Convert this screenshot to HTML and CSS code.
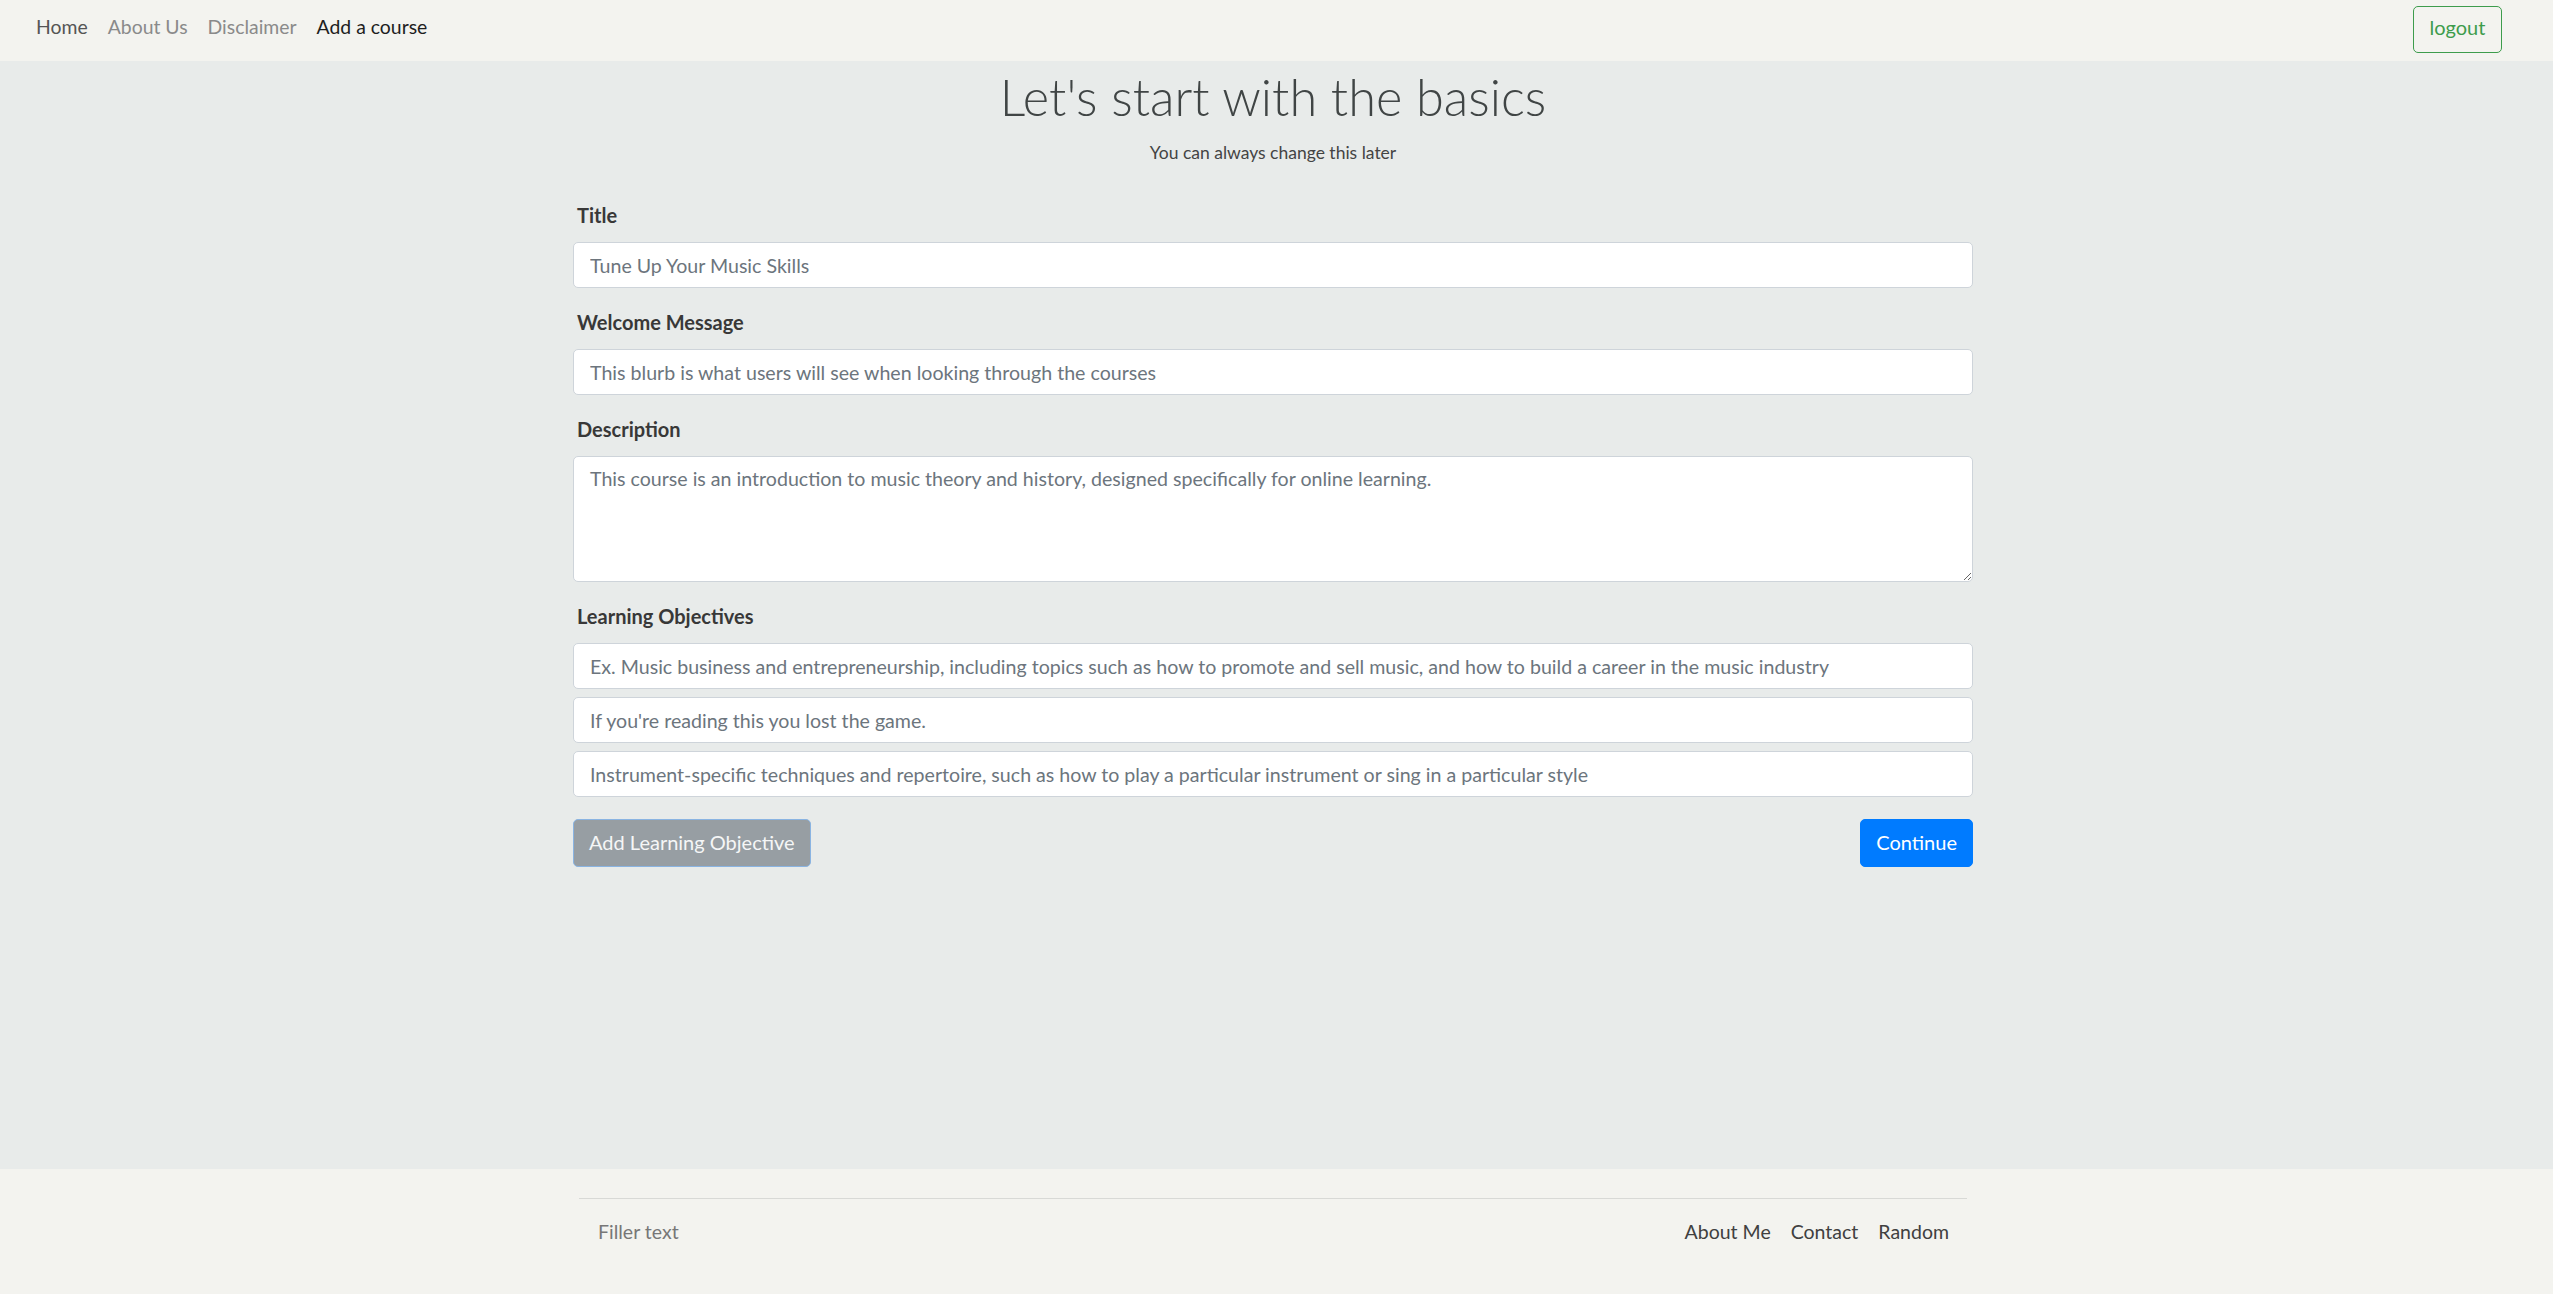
FILE: index.html
```html
<!DOCTYPE html>
<html lang="en">
<head>
<meta charset="utf-8">
<title>Add a course</title>
<link rel="stylesheet" href="styles.css">
</head>
<body>
<header class="navbar">
  <nav class="nav-left">
    <a class="nav-link nav-home" href="#">Home</a>
    <a class="nav-link nav-muted" href="#">About Us</a>
    <a class="nav-link nav-muted" href="#">Disclaimer</a>
    <a class="nav-link nav-active" href="#">Add a course</a>
  </nav>
  <button class="btn-logout" type="button">logout</button>
</header>

<main class="main">
  <div class="container">
    <h1 class="page-title">Let's start with the basics</h1>
    <p class="subtitle">You can always change this later</p>

    <form class="course-form">
      <div class="form-group">
        <label class="form-label" for="title">Title</label>
        <input class="form-control" id="title" type="text" value="Tune Up Your Music Skills">
      </div>
      <div class="form-group">
        <label class="form-label" for="welcome">Welcome Message</label>
        <input class="form-control" id="welcome" type="text" value="This blurb is what users will see when looking through the courses">
      </div>
      <div class="form-group">
        <label class="form-label" for="desc">Description</label>
        <textarea class="form-control form-textarea" id="desc">This course is an introduction to music theory and history, designed specifically for online learning.</textarea>
      </div>
      <div class="form-group group-objectives">
        <label class="form-label" for="obj1">Learning Objectives</label>
        <div class="objectives">
          <input class="form-control" id="obj1" type="text" value="Ex. Music business and entrepreneurship, including topics such as how to promote and sell music, and how to build a career in the music industry">
          <input class="form-control" type="text" value="If you're reading this you lost the game.">
          <input class="form-control" type="text" value="Instrument-specific techniques and repertoire, such as how to play a particular instrument or sing in a particular style">
        </div>
      </div>
      <div class="actions">
        <button class="btn btn-disabled" type="button">Add Learning Objective</button>
        <button class="btn btn-primary" type="button">Continue</button>
      </div>
    </form>
  </div>
</main>

<footer class="footer">
  <div class="footer-inner">
    <hr class="footer-rule">
    <div class="footer-row">
      <span class="filler">Filler text</span>
      <nav class="footer-links">
        <a class="footer-link" href="#">About Me</a>
        <a class="footer-link" href="#">Contact</a>
        <a class="footer-link" href="#">Random</a>
      </nav>
    </div>
  </div>
</footer>
</body>
</html>
```

FILE: styles.css
```css
html, body {
  margin: 0;
  padding: 0;
}

body {
  min-height: 100vh;
  display: flex;
  flex-direction: column;
  font-family: Lato, "Liberation Sans", sans-serif;
  font-size: 20px;
  color: #333;
  background: #e8ebea;
}

/* ---------- navbar ---------- */
.navbar {
  height: 61px;
  box-sizing: border-box;
  background: #f3f3ef;
  display: flex;
  align-items: flex-start;
  justify-content: space-between;
  padding: 0 51px 0 26px;
}

.nav-left {
  display: flex;
  padding-top: 12px;
}

.nav-link {
  font-size: 19.4px;
  line-height: 30px;
  padding: 0 10px;
  text-decoration: none;
}

.nav-home { color: #555; }
.nav-muted { color: #8a8a8a; }
.nav-active { color: #1e1e1e; }

.btn-logout {
  margin-top: 6px;
  width: 89px;
  height: 47px;
  box-sizing: border-box;
  padding: 5px 0 10px;
  font-family: inherit;
  font-size: 20px;
  line-height: 30px;
  color: #3d9c4c;
  background: transparent;
  border: 1px solid #3d9c4c;
  border-radius: 5px;
}

/* ---------- main ---------- */
.main {
  flex: 1;
  padding-right: 7px;
}

.container {
  width: 1400px;
  margin: 0 auto;
}

.page-title {
  margin: 5px 0 0;
  font-size: 50.5px;
  line-height: 61px;
  font-weight: 300;
  text-align: center;
  color: #404545;
}

.subtitle {
  margin: 13px 0 0;
  font-size: 17.5px;
  line-height: 26px;
  text-align: center;
  color: #444;
}

.course-form {
  margin-top: 34px;
}

.form-group {
  margin-bottom: 19px;
}

.form-label {
  display: block;
  margin: 0 0 12px;
  padding-left: 4px;
  font-size: 20px;
  line-height: 30px;
  font-weight: 700;
  color: #383838;
}

.form-control {
  display: block;
  width: 100%;
  box-sizing: border-box;
  height: 46px;
  margin: 0;
  padding: 0 16px;
  font-family: inherit;
  font-size: 19.6px;
  line-height: 30px;
  color: #6c757d;
  background: #fff;
  border: 1px solid #ced4da;
  border-radius: 5px;
  outline: none;
}

.form-textarea {
  height: 126px;
  padding: 7px 16px;
  resize: vertical;
}

.group-objectives {
  margin-bottom: 22px;
}

.objectives {
  display: flex;
  flex-direction: column;
  gap: 8px;
}

.actions {
  display: flex;
  justify-content: space-between;
}

.btn {
  height: 48px;
  box-sizing: border-box;
  padding: 7px 15px 9px;
  font-family: inherit;
  font-size: 20px;
  line-height: 30px;
  border-radius: 5px;
  color: #fff;
}

.btn-disabled {
  background: #979ea3;
  border: 1px solid #8ab4e2;
  color: #f5f6f6;
}

.btn-primary {
  background: #007bff;
  border: 1px solid #007bff;
}

/* ---------- footer ---------- */
.footer {
  height: 125px;
  box-sizing: border-box;
  background: #f3f3ef;
  padding-right: 7px;
}

.footer-inner {
  width: 1400px;
  margin: 0 auto;
  padding-top: 29px;
}

.footer-rule {
  margin: 0 6px;
  border: 0;
  border-top: 1px solid #d8d9d6;
  height: 0;
}

.footer-row {
  margin-top: 18px;
  display: flex;
  justify-content: space-between;
  padding: 0 14px 0 25px;
  font-size: 19.5px;
  line-height: 30px;
}

.filler {
  color: #777;
}

.footer-links {
  display: flex;
}

.footer-link {
  padding: 0 10px;
  color: #404040;
  text-decoration: none;
}
```
